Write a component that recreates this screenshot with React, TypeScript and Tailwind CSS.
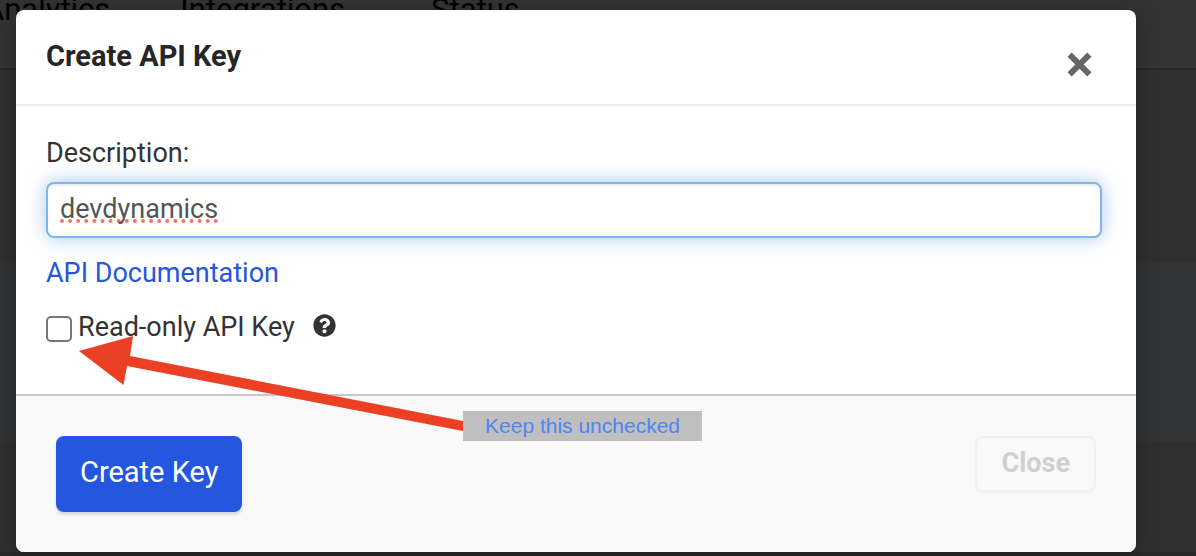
import { useState } from "react";
import { FaQuestionCircle } from "react-icons/fa";

function Backdrop() {
  return (
    <div aria-hidden="true" className="flex min-h-screen flex-col bg-[#303030]">
      <nav className="flex h-[70px] items-start gap-[70px] overflow-hidden border-b-2 border-[#282828] bg-[#333333] text-[31px] leading-5 text-black">
        <span className="-ml-4">Analytics</span>
        <span>Integrations</span>
        <span className="ml-4">Status</span>
      </nav>
      <div className="h-[192px] border-b border-[#303030]" />
      <div className="h-[180px] bg-[#313335]" />
      <div className="grow" />
      <div className="h-1 bg-[#2a2829]" />
    </div>
  );
}

function Annotation() {
  return (
    <div className="pointer-events-none absolute top-[336px] left-[79px] flex items-end">
      <svg width="384" height="105" viewBox="0 0 384 105" aria-hidden="true">
        <path d="M0 15 54 0 51 20 384 85v10L48 30 44.500 49Z" fill="#ec4025" />
      </svg>
      <div className="flex h-[30px] w-[239px] items-center justify-center bg-[#bfbfbf] font-['Liberation_Sans',sans-serif] text-[21px] leading-6 text-[#4c86f8]">
        Keep this unchecked
      </div>
    </div>
  );
}

export default function App() {
  const [description, setDescription] = useState("devdynamics");
  const [readOnly, setReadOnly] = useState(false);

  return (
    <div className="relative font-[Roboto,sans-serif]">
      <Backdrop />
      <div className="absolute inset-x-0 top-0 pt-[10px] pr-[60px] pl-4">
        <div
          role="dialog"
          aria-labelledby="dialog-title"
          className="overflow-hidden rounded-lg bg-white text-[27px] leading-8 text-[#333333] shadow-[0_6px_24px_rgba(0,0,0,0.3)]"
        >
          <header className="flex h-24 items-start justify-between border-b-2 border-[#eeeeee] pt-[30px] pr-11 pl-[30px]">
            <h1 id="dialog-title" className="text-[29px] leading-8 font-bold text-[#262626]">
              Create API Key
            </h1>
            <button type="button" aria-label="Close dialog" className="mt-3">
              <svg width="25" height="25" viewBox="0 0 24 24" aria-hidden="true">
                <path
                  d="m4.500 0.500 7.500 7.500 7.500-7.500 4 4-7.500 7.500 7.500 7.500-4 4-7.500-7.500-7.500 7.500-4-4 7.500-7.500-7.500-7.500Z"
                  fill="#666666"
                />
              </svg>
            </button>
          </header>

          <div className="flex flex-col items-start px-[30px] pt-[31px] pb-[51px]">
            <label htmlFor="description">Description:</label>
            <div className="mt-[13px] w-full pr-1">
              <input
                id="description"
                type="text"
                value={description}
                onChange={(e) => setDescription(e.target.value)}
                spellCheck={false}
                className="block h-14 w-full rounded-lg border-2 border-[#82b6ea] bg-white px-3 pb-[2px] leading-12 text-[#555555] underline decoration-[#ee776c] decoration-dotted decoration-4 underline-offset-1 shadow-[inset_0_2px_2px_rgba(0,0,0,0.075),0_0_18px_rgba(102,165,233,0.6)] outline-none [text-decoration-skip-ink:none]"
              />
            </div>
            <a href="#api-documentation" className="mt-[19px] text-[#2456df]">
              API Documentation
            </a>
            <div className="mt-[22px] flex items-center">
              <input
                id="read-only"
                type="checkbox"
                checked={readOnly}
                onChange={(e) => setReadOnly(e.target.checked)}
                className="mt-1 size-[26px] appearance-none rounded-[5px] border-2 border-[#767676] bg-white checked:bg-[#2456df]"
              />
              <label htmlFor="read-only" className="ml-[6px]">
                Read-only API Key
              </label>
              <FaQuestionCircle className="mb-1 ml-[18px] size-[23px]" />
            </div>
          </div>

          <footer className="flex items-start justify-between border-t-2 border-[#c8c8c8] bg-[#f9f9f9] px-10 py-10">
            <button
              type="button"
              className="h-[76px] rounded-lg bg-[#2456df] px-6 pb-1 text-[29px] leading-8 text-white shadow-[0_3px_3px_rgba(0,0,0,0.12)]"
            >
              Create Key
            </button>
            <button
              type="button"
              className="h-14 rounded-lg border-2 border-[#f1f1f1] px-6 pb-[2px] font-bold text-[#d0d0d0] shadow-[0_2px_2px_rgba(0,0,0,0.02)]"
            >
              Close
            </button>
          </footer>
        </div>
      </div>
      <Annotation />
    </div>
  );
}
